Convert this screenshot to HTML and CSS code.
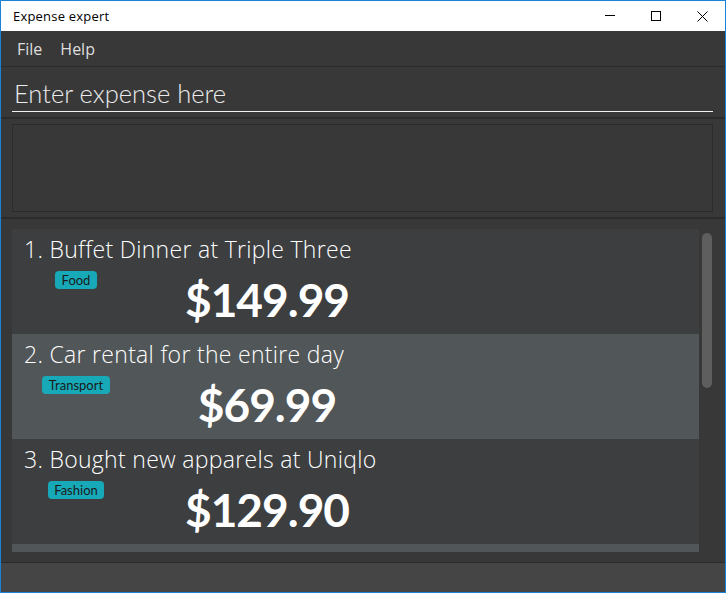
FILE: index.html
```html
<!DOCTYPE html>
<html lang="en">
<head>
<meta charset="utf-8">
<title>Expense expert</title>
<link rel="stylesheet" href="styles.css">
</head>
<body>
<div class="window">
  <header class="titlebar">
    <span class="title">Expense expert</span>
    <div class="controls">
      <span class="ctl"><svg width="10" height="10" viewBox="0 0 10 10"><path d="M0 4.5H10" stroke="#000" stroke-width="1"/></svg></span>
      <span class="ctl"><svg width="10" height="10" viewBox="0 0 10 10"><rect x="0.5" y="0.5" width="9" height="9" fill="none" stroke="#000" stroke-width="1"/></svg></span>
      <span class="ctl"><svg width="11" height="11" viewBox="0 0 11 11"><path d="M0.5 0.5L10.5 10.5M10.5 0.5L0.5 10.5" stroke="#000" stroke-width="1"/></svg></span>
    </div>
  </header>
  <nav class="menubar">
    <span class="menu-item">File</span>
    <span class="menu-item">Help</span>
  </nav>
  <div class="command-panel">
    <input class="command-input" type="text" placeholder="Enter expense here">
  </div>
  <div class="result-panel">
    <div class="result-box"></div>
  </div>
  <div class="list-panel">
    <div class="list-viewport">
      <div class="cell even">
        <div class="cell-title">1. Buffet Dinner at Triple Three</div>
        <div class="cell-body">
          <span class="tag">Food</span>
          <span class="amount">$149.99</span>
        </div>
      </div>
      <div class="cell odd">
        <div class="cell-title">2. Car rental for the entire day</div>
        <div class="cell-body">
          <span class="tag">Transport</span>
          <span class="amount">$69.99</span>
        </div>
      </div>
      <div class="cell even">
        <div class="cell-title">3. Bought new apparels at Uniqlo</div>
        <div class="cell-body">
          <span class="tag">Fashion</span>
          <span class="amount">$129.90</span>
        </div>
      </div>
      <div class="cell odd"></div>
    </div>
    <div class="scroll-track"><div class="scroll-thumb"></div></div>
  </div>
  <footer class="statusbar"></footer>
</div>
</body>
</html>
```
FILE: styles.css
```css
html, body {
  margin: 0;
  padding: 0;
  background: #383838;
}

.window {
  box-sizing: border-box;
  width: 726px;
  height: 593px;
  border: 1px solid #1883d7;
  display: flex;
  flex-direction: column;
  background: #383838;
  overflow: hidden;
}

.titlebar {
  flex: none;
  height: 30px;
  background: #ffffff;
  display: flex;
  align-items: center;
  justify-content: space-between;
}

.title {
  padding-left: 12px;
  font-family: "Open Sans", sans-serif;
  font-size: 13px;
  letter-spacing: 0.2px;
  color: #000000;
}

.controls {
  display: flex;
  align-self: stretch;
}

.ctl {
  width: 46px;
  display: flex;
  align-items: center;
  justify-content: center;
}

.ctl svg {
  display: block;
}

.menubar {
  flex: none;
  height: 35px;
  display: flex;
  align-items: center;
  padding-left: 7px;
  border-bottom: 1px solid #2b2b2b;
}

.menu-item {
  padding: 0 9px;
  font-family: "Open Sans", sans-serif;
  font-size: 16px;
  color: #dedede;
}

.command-panel {
  flex: none;
  padding: 7px 12px 5px 11px;
  border-bottom: 2px solid #2b2b2b;
}

.command-input {
  display: block;
  box-sizing: border-box;
  width: 100%;
  height: 38px;
  margin: 0;
  padding: 0 2px;
  border: 0;
  border-bottom: 1px solid #f2f2f2;
  background: transparent;
  outline: none;
  font-family: Lato, sans-serif;
  font-weight: 300;
  font-size: 25.5px;
  color: #ececec;
}

.command-input::placeholder {
  color: #ececec;
  opacity: 1;
}

.result-panel {
  flex: none;
  padding: 5px 12px 5px 11px;
  border-bottom: 2px solid #2b2b2b;
}

.result-box {
  height: 86px;
  border: 1px solid #2c2c2c;
  background: #383838;
}

.list-panel {
  flex: 1;
  min-height: 0;
  display: flex;
  padding: 10px 13px 10px 11px;
  border-bottom: 1px solid #2b2b2b;
}

.list-viewport {
  width: 687px;
  overflow: hidden;
}

.scroll-track {
  width: 10px;
  margin-left: 3px;
  padding-top: 4px;
}

.scroll-thumb {
  height: 155px;
  border-radius: 5px;
  background: #5e5e5e;
}

.statusbar {
  flex: none;
  height: 29px;
  background: #454545;
}

.cell {
  box-sizing: border-box;
  height: 105px;
  padding-top: 7px;
}

.cell.even {
  background: #3c3e3f;
}

.cell.odd {
  background: #515658;
}

.cell-title {
  padding-left: 12px;
  font-family: "Open Sans", sans-serif;
  font-weight: 300;
  font-size: 23px;
  line-height: 26px;
  letter-spacing: 0.3px;
  color: #ffffff;
  white-space: nowrap;
}

.cell-body {
  display: grid;
  grid-template-columns: 128px 254px;
  align-items: start;
  margin-top: 9px;
}

.tag {
  justify-self: center;
  padding: 0 6.5px;
  border-radius: 4px;
  background: #17a9b8;
  color: #1a1a1a;
  font-family: Lato, sans-serif;
  font-size: 13px;
  line-height: 18px;
}

.amount {
  justify-self: center;
  margin-top: 6px;
  font-family: Lato, sans-serif;
  font-weight: 700;
  font-size: 46px;
  line-height: 1;
  letter-spacing: -1px;
  color: #ffffff;
}
```
